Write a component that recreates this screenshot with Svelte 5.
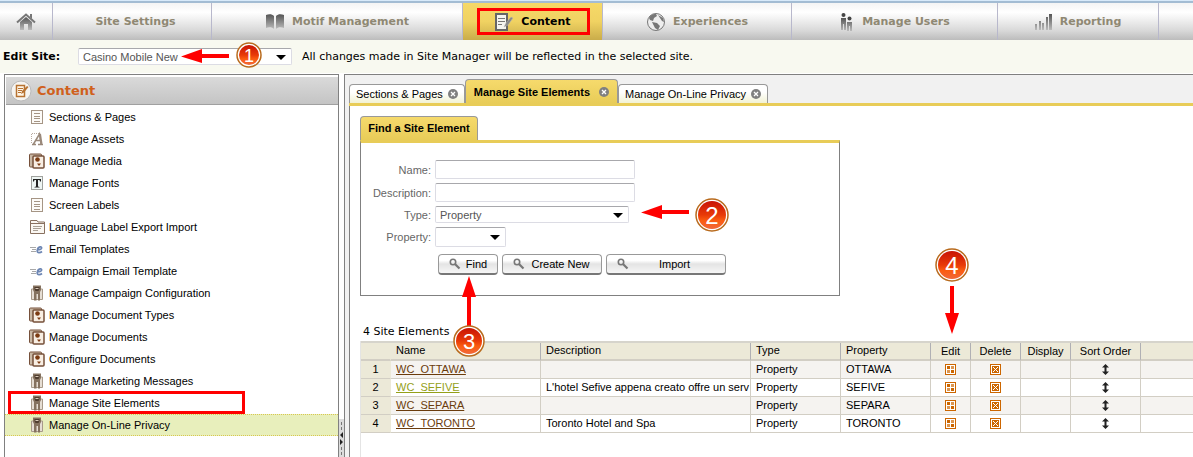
<script>
  let site = $state('Casino Mobile New');
  let type = $state('Property');
  let property = $state('');
  let name = $state('');
  let description = $state('');

  const nav = [
    { label: 'Site Settings' },
    { label: 'Motif Management', icon: 'book' },
    { label: 'Content', icon: 'edit', active: true },
    { label: 'Experiences', icon: 'globe' },
    { label: 'Manage Users', icon: 'users' },
    { label: 'Reporting', icon: 'chart' }
  ];

  const menu = [
    ['Sections & Pages', 'page'],
    ['Manage Assets', 'asset'],
    ['Manage Media', 'media'],
    ['Manage Fonts', 'font'],
    ['Screen Labels', 'page'],
    ['Language Label Export Import', 'window'],
    ['Email Templates', 'mail'],
    ['Campaign Email Template', 'mail'],
    ['Manage Campaign Configuration', 'tool'],
    ['Manage Document Types', 'media'],
    ['Manage Documents', 'media'],
    ['Configure Documents', 'media'],
    ['Manage Marketing Messages', 'tool'],
    ['Manage Site Elements', 'tool'],
    ['Manage On-Line Privacy', 'tool']
  ];

  const tabs = ['Sections & Pages', 'Manage Site Elements', 'Manage On-Line Privacy'];
  const buttons = [
    ['Find', 'find'],
    ['Create New', 'create'],
    ['Import', 'import']
  ];

  const rows = [
    { name: 'WC_OTTAWA', desc: '', property: 'OTTAWA' },
    { name: 'WC_SEFIVE', desc: "L'hotel Sefive appena creato offre un serv", property: 'SEFIVE' },
    { name: 'WC_SEPARA', desc: '', property: 'SEPARA' },
    { name: 'WC_TORONTO', desc: 'Toronto Hotel and Spa', property: 'TORONTO' }
  ];
</script>

{#snippet navIcon(kind)}
  {#if kind === 'book'}
    <svg width="20" height="18" viewBox="0 0 20 18" aria-hidden="true">
      <path d="M1 2C4 1 7 1 9 3V16C7 14 4 14 1 15Z" fill="url(#fade)" />
      <path d="M11 3C13 1 16 1 19 2V15C16 14 13 14 11 16Z" fill="url(#fade)" />
    </svg>
  {:else if kind === 'edit'}
    <svg width="20" height="20" viewBox="0 0 20 20" aria-hidden="true">
      <rect x="2" y="2" width="11" height="16" fill="#f4f4f0" stroke="#666" stroke-width="2" />
      <path d="M4 6.500H11M4 9.500H11M4 12.500H8" stroke="#777" />
      <path d="M10 15L12 11L17 5L19 6L14 13Z" fill="#888" stroke="#bbb" stroke-width=".5" />
    </svg>
  {:else if kind === 'globe'}
    <svg width="20" height="20" viewBox="0 0 20 20" aria-hidden="true">
      <circle cx="10" cy="10" r="8.500" fill="#eee" stroke="#777" />
      <path d="M3 6C5 2 8 2 10 2L11 4L8 6L7 9L4 8ZM12 3L17 6L18 10L16 9L14 6ZM6 10L11 11L14 14L12 18L9 16Z" fill="#777" />
    </svg>
  {:else if kind === 'users'}
    <svg width="16" height="20" viewBox="0 0 16 20" aria-hidden="true">
      <circle cx="4.500" cy="3" r="2" fill="#444" />
      <circle cx="10.500" cy="6.500" r="2" fill="#444" />
      <path d="M2 6H7V18H2ZM8 10H13V19H8Z" fill="url(#fade)" />
      <path d="M4.500 12V18M10.500 14V19" stroke="#ddd" />
    </svg>
  {:else if kind === 'chart'}
    <svg width="18" height="20" viewBox="0 0 18 20" aria-hidden="true">
      <path d="M0 12H2V18H0ZM4 9H6V18H4ZM7 11H9V18H7ZM11 5H13V18H11ZM14 2H17V18H14Z" fill="url(#fade)" />
    </svg>
  {:else}
    <i></i>
  {/if}
{/snippet}

{#snippet menuIcon(kind)}
  <svg class="micon" width="16" height="16" viewBox="0 0 16 16" aria-hidden="true">
    {#if kind === 'page'}
      <rect x="2.500" y="1.500" width="11" height="13" fill="#fdfbf8" stroke="#a59585" />
      <path d="M5 4.500H11M5 7.500H11M5 9.500H11M5 12.500H11" stroke="#a59585" />
    {:else if kind === 'asset'}
      <path d="M2.500 12V2.500H10" fill="none" stroke="#b8aaa0" stroke-dasharray="1 1" />
      <path d="M3 13.500H7M9 13.500H14M4.500 13L10.500 3L12 13M6 9.500H11" fill="none" stroke="#9a897b" stroke-width="1.500" />
      <path d="M11 3L12.500 13" stroke="#9a897b" stroke-width="2" />
    {:else if kind === 'media'}
      <rect x="0.500" y="1" width="12" height="13" rx="1" fill="#c9b8a5" stroke="#76503a" />
      <rect x="4" y="3" width="11" height="12" rx="1" fill="#f8eee3" stroke="#76503a" stroke-width="1.500" />
      <circle cx="8.500" cy="6.500" r="2.300" fill="#7c3b12" />
      <path d="M8 10.500H12L10 13Z" fill="#7c3b12" />
    {:else if kind === 'font'}
      <rect x="2.500" y="1.500" width="11" height="13" fill="#eef5f3" stroke="#a0a29e" />
      <path d="M4 4H12V6.500H11L10.500 5H9V11.500L10.500 12V12.500H5.500V12L7 11.500V5H5.500L5 6.500H4Z" fill="#222" />
    {:else if kind === 'window'}
      <path d="M1.500 14.500V1.500H8L9 3H15.500V14.500Z" fill="#faf7f2" stroke="#88705f" />
      <path d="M1.500 4.500H15.500" stroke="#88705f" />
      <path d="M4 7.500H13M4 9.500H12M4 11.500H9" stroke="#aaa095" />
    {:else if kind === 'mail'}
      <path d="M1 6.500H7M3 8.500H7M2 10.500H7" stroke="#a8a8a8" />
      <path d="M8.500 8.800C11 8.800 13 8 12.600 6.500C12 5 8.500 6 8.200 9.500C8 12.500 11.500 11.800 13 10.500" fill="none" stroke="#6d86b4" stroke-width="1.700" />
    {:else}
      <path d="M2.500 4V14.500H13.500V4Z" fill="#e6ded4" stroke="#a89a8a" />
      <path d="M4 0.500H12V5L11 7V15.500H9V9H7.500V15.500H5V7L4 5Z" fill="#85725f" />
      <path d="M5.500 2H10.500V4L9.500 6H6.500L5.500 4Z" fill="#4e3c2e" />
      <path d="M6.500 3.500H9.500" stroke="#d8c9b8" />
    {/if}
  </svg>
{/snippet}

{#snippet badge(n, cx, cy, r)}
  <g>
    <circle {cx} {cy} r={r - 1} fill="#fff" stroke="#b86a1c" stroke-width="1.500" />
    <circle {cx} {cy} r={r - 3} fill="url(#hot)" />
    <text x={cx} y={cy + Math.round(r / 2)} font-size={Math.round(r * 1.4)}>{n}</text>
  </g>
{/snippet}

<svg class="defs" width="0" height="0" aria-hidden="true">
  <defs>
    <linearGradient id="fade" x2="0" y2="1">
      <stop offset="0" stop-color="#555" />
      <stop offset="1" stop-color="#bbb" />
    </linearGradient>
    <linearGradient id="hot" x2="0" y2="1">
      <stop offset="0" stop-color="#c81404" />
      <stop offset=".5" stop-color="#e83a08" />
      <stop offset=".7" stop-color="#fb5c10" />
      <stop offset="1" stop-color="#f0683a" />
    </linearGradient>
  </defs>
</svg>

<div class="page">
  <nav>
    <a href="#home" aria-label="Home">
      <svg width="20" height="20" viewBox="0 0 20 20" aria-hidden="true">
        <path d="M4 10L10 5L16 10V18H12V12H8V18H4Z" fill="url(#fade)" />
        <path d="M1 10.500L10 2.500L19 10.500" fill="none" stroke="#777" stroke-width="2" />
        <path d="M14 2H16V7L14 5Z" fill="#777" />
      </svg>
    </a>
    {#each nav as item}
      <a href="#{item.label}" class:active={item.active}>
        {@render navIcon(item.icon)}
        <span>{item.label}</span>
      </a>
    {/each}
  </nav>

  <div class="sitebar">
    <label for="site">Edit Site:</label>
    <span class="select site">
      <select id="site" bind:value={site}><option>Casino Mobile New</option></select>
    </span>
    <span>All changes made in Site Manager will be reflected in the selected site.</span>
  </div>

  <div class="body">
    <aside>
      <h2>
        <svg width="22" height="22" viewBox="0 0 22 22" aria-hidden="true">
          <circle cx="11" cy="11" r="10" fill="#f6f4f1" stroke="#bbb" />
          <path d="M6.500 5.500H14.500V16.500H6.500Z" fill="#fff6e8" stroke="#b87333" stroke-width="1.500" />
          <path d="M8 8.500H13M8 10.500H12M8 12.500H11" stroke="#b87333" />
          <path d="M11 14L12 11L17 6L18.500 7L14 12.500Z" fill="#b87333" />
        </svg>
        Content
      </h2>
      <ul>
        {#each menu as [label, icon], i}
          <li class:current={i === menu.length - 1} class:marked={label === 'Manage Site Elements'}>
            <a href="#{label}">{@render menuIcon(icon)}{label}</a>
          </li>
        {/each}
      </ul>
    </aside>

    <div class="splitter">
      <div class="grip">
        <svg width="5" height="38" viewBox="0 0 5 38" aria-hidden="true">
          <path d="M2.500 3V13M2.500 28V38" stroke="#777" stroke-dasharray="3 2" />
          <path d="M4 13V19L1 16ZM1 20V26L4 23Z" fill="#222" />
        </svg>
      </div>
    </div>

    <main>
      <div class="tabs">
        {#each tabs as tab, i}
          <div class="tab" class:on={i === 1}>
            <span>{tab}</span>
            <button class="close" aria-label="Close {tab}">
              <svg width="10" height="10" viewBox="0 0 10 10" aria-hidden="true">
                <circle cx="5" cy="5" r="5" fill="#808080" />
                <path d="M3 3L7 7M7 3L3 7" stroke="#fff" stroke-width="1.300" />
              </svg>
            </button>
          </div>
        {/each}
      </div>

      <div class="content">
        <section class="finder">
          <h3>Find a Site Element</h3>
          <form onsubmit={(e) => e.preventDefault()}>
            <label for="name">Name:</label>
            <input id="name" type="text" bind:value={name} />
            <label for="description">Description:</label>
            <input id="description" type="text" bind:value={description} />
            <label for="type">Type:</label>
            <span class="select type">
              <select id="type" bind:value={type}><option>Property</option></select>
            </span>
            <label for="property">Property:</label>
            <span class="select property">
              <select id="property" bind:value={property}><option value=""></option></select>
            </span>
            <div class="buttons">
              {#each buttons as [label, kind]}
                <button type="button" class="push {kind}">
                  <svg width="12" height="12" viewBox="0 0 12 12" aria-hidden="true">
                    <circle cx="4" cy="4" r="2.700" fill="none" stroke="#777" stroke-width="1.600" />
                    <path d="M6 6L10.500 10.500" stroke="#777" stroke-width="2.200" />
                  </svg>
                  <span>{label}</span>
                </button>
              {/each}
            </div>
          </form>
        </section>

        <p class="count">4 Site Elements</p>
        <div class="grid">
          <table>
            <colgroup>
              <col class="w30" /><col class="w150" /><col class="w210" /><col class="w90" /><col class="w90" />
              <col class="w40" /><col class="w50" /><col class="w50" /><col class="w70" /><col />
            </colgroup>
            <thead>
              <tr>
                <th></th><th>Name</th><th>Description</th><th>Type</th><th>Property</th>
                <th class="mid">Edit</th><th class="mid">Delete</th><th class="mid">Display</th>
                <th class="mid">Sort Order</th><th></th>
              </tr>
            </thead>
            <tbody>
              {#each rows as row, i}
                <tr>
                  <td class="num">{i + 1}</td>
                  <td><a href="#{row.name}" class:visited={i === 1}>{row.name}</a></td>
                  <td>{row.desc}</td>
                  <td>Property</td>
                  <td>{row.property}</td>
                  <td class="mid">
                    <button aria-label="Edit {row.name}">
                      <svg width="11" height="11" viewBox="0 0 11 11" aria-hidden="true">
                        <rect x=".5" y=".5" width="10" height="10" fill="#fff" stroke="#c60" />
                        <path d="M2 2H5V5H2ZM6 6H9V9H6Z" fill="#c60" />
                        <path d="M6 2H9V5H6ZM2 6H5V9H2Z" fill="#dc9650" />
                      </svg>
                    </button>
                  </td>
                  <td class="mid">
                    <button aria-label="Delete {row.name}">
                      <svg width="11" height="11" viewBox="0 0 11 11" aria-hidden="true">
                        <rect x=".5" y=".5" width="10" height="10" fill="#fff" stroke="#c60" />
                        <rect x="2" y="2" width="7" height="7" fill="#c60" />
                        <path d="M3 3L8 8M8 3L3 8" stroke="#fff" />
                      </svg>
                    </button>
                  </td>
                  <td></td>
                  <td class="mid">
                    <button aria-label="Sort {row.name}">
                      <svg width="7" height="11" viewBox="0 0 7 11" aria-hidden="true">
                        <path d="M3.500 0L7 3.500H4.500V7.500H7L3.500 11L0 7.500H2.500V3.500H0Z" fill="#222" />
                      </svg>
                    </button>
                  </td>
                  <td></td>
                </tr>
              {/each}
            </tbody>
          </table>
        </div>
      </div>
    </main>
  </div>

  <svg class="callouts" width="980" height="370" viewBox="0 0 980 370" aria-hidden="true">
    <g fill="#f00">
      <path d="M181 56.500L202 49V54H229V58H202V63Z" />
      <path d="M641 212.500L662 205V210H689V214H662V219Z" />
      <path d="M469 276L476 297H471V326H467V297H462Z" />
      <path d="M952 334L945 313H950V286H954V313H959Z" />
    </g>
    {@render badge(1, 249, 55, 13)}
    {@render badge(2, 712, 215, 17)}
    {@render badge(3, 469, 341, 16)}
    {@render badge(4, 952, 265, 17)}
  </svg>
</div>

<style>
  :global(body) {
    margin: 0;
    background: #fff;
  }
  .defs {
    position: absolute;
  }
  .page {
    position: relative;
    box-sizing: border-box;
    min-height: 100vh;
    display: flex;
    flex-direction: column;
    overflow: hidden;
    font: 11px/14px 'Liberation Sans', Arial, sans-serif;
    color: #000;
  }
  a {
    color: inherit;
    text-decoration: none;
  }
  button {
    font: inherit;
    color: inherit;
  }

  nav {
    display: grid;
    grid-template-columns: 53fr 159fr 251fr 140fr 189fr 206fr 161fr 34fr;
    height: 37px;
    margin-top: 1px;
    border-top: 2px solid #a3bcd3;
    box-shadow: 0 -1px #d8eafa;
    background: linear-gradient(#f4f4f4, #fff 25%, #f0f0f0 45%, #d8d8d8 75%, #bcbcbc);
  }
  nav a {
    position: relative;
    display: flex;
    align-items: center;
    justify-content: center;
    gap: 7px;
    border-right: 1px solid #b8b8cc;
    font: bold 11px/16px 'DejaVu Sans', Verdana, sans-serif;
    color: #8f8873;
    white-space: nowrap;
  }
  nav a.active {
    color: #000;
    background: linear-gradient(#f6d968, #f0d262 50%, #c9ac4a);
  }
  nav a.active::after {
    content: '';
    position: absolute;
    inset: 5px 12px 5px 14px;
    border: 3px solid #f00;
  }

  .sitebar {
    display: flex;
    align-items: center;
    gap: 10px;
    height: 33px;
    padding-left: 3px;
    background: #f8f9f0;
    font: 11px/16px 'DejaVu Sans', Verdana, sans-serif;
  }
  .sitebar label {
    width: 65px;
    font-weight: bold;
    white-space: nowrap;
  }

  .select {
    position: relative;
    display: block;
  }
  .select::after {
    content: '';
    position: absolute;
    right: 6px;
    top: 50%;
    margin-top: -2px;
    border: 5px solid transparent;
    border-top-color: #000;
    border-bottom: 0;
    pointer-events: none;
  }
  select,
  input {
    box-sizing: border-box;
    width: 100%;
    height: 100%;
    margin: 0;
    padding: 0 4px;
    display: block;
    appearance: none;
    border: 1px solid #dcdce4;
    border-top-color: #a8a8ac;
    border-radius: 2px;
    background: #fff;
    font: 11px/14px 'Liberation Sans', Arial, sans-serif;
    color: #555;
  }
  .site {
    width: 214px;
    height: 17px;
  }
  .type {
    width: 194px;
    height: 17px;
  }
  .property {
    width: 71px;
    height: 20px;
  }

  .body {
    flex: 1;
    display: flex;
    margin-top: 1px;
    padding-left: 4px;
  }
  aside {
    width: 333px;
    flex: none;
    border: 1px solid #808080;
    border-bottom: 0;
  }
  h2 {
    display: flex;
    align-items: center;
    gap: 5px;
    height: 27px;
    margin: 2px 0 0 1px;
    padding-left: 4px;
    border-bottom: 1px solid #a0a0a0;
    background: linear-gradient(#dadada, #c4c4c4);
    font: bold 13px/16px 'DejaVu Sans', Verdana, sans-serif;
    color: #d0601c;
  }
  ul {
    list-style: none;
    margin: 1px 0 0;
    padding: 0;
  }
  li {
    position: relative;
  }
  li a {
    box-sizing: border-box;
    display: flex;
    align-items: center;
    gap: 4px;
    height: 22px;
    padding-left: 24px;
    border: 1px solid transparent;
    border-width: 1px 0;
  }
  li.current a {
    background: #e8efbc;
    border: 1px dotted #d8c850;
    border-width: 1px 0;
  }
  li.marked::after {
    content: '';
    position: absolute;
    z-index: 1;
    inset: -1px 93px 0 3px;
    border: 3px solid #f00;
  }

  .splitter {
    width: 5px;
    flex: none;
    display: flex;
    align-items: flex-end;
    background: #fff;
  }
  .grip {
    width: 5px;
    height: 38px;
    background: #dcdcdc;
  }

  main {
    flex: 1;
    min-width: 0;
    display: flex;
    flex-direction: column;
    padding-left: 4px;
    border: 1px solid #808080;
    border-width: 1px 0 0 1px;
    background: #f1f1f1;
  }
  .tabs {
    display: flex;
    align-items: flex-end;
    height: 28px;
    border-bottom: 3px solid #e8cc58;
  }
  .tab {
    box-sizing: border-box;
    display: flex;
    align-items: center;
    gap: 5px;
    height: 19px;
    padding: 0 6px;
    border: 1px solid #999;
    border-bottom: 0;
    border-radius: 4px 4px 0 0;
    background: linear-gradient(#fff 40%, #f2f2d4);
    white-space: nowrap;
  }
  .tab.on {
    height: 24px;
    padding: 0 8px;
    gap: 9px;
    background: linear-gradient(#f6da6c, #e8cc58);
    font-weight: bold;
  }
  .close,
  td button {
    display: block;
    padding: 0;
    border: 0;
    background: none;
  }
  .close svg,
  td svg {
    display: block;
  }

  .content {
    flex: 1;
    padding: 10px 0 0 10px;
    border-left: 1px solid #808080;
    background: #fff;
  }
  .finder {
    width: 480px;
  }
  h3 {
    box-sizing: border-box;
    width: 118px;
    height: 24px;
    margin: 0;
    border: 1px solid #999;
    border-bottom: 0;
    border-radius: 4px 4px 0 0;
    background: linear-gradient(#f6da6c, #e8cc58);
    font-size: 11px;
    line-height: 23px;
    text-align: center;
    white-space: nowrap;
  }
  form {
    box-sizing: border-box;
    display: grid;
    grid-template-columns: 70px 1fr;
    grid-template-rows: 19px 19px 17px 20px 22px;
    align-items: center;
    gap: 4px;
    height: 156px;
    padding: 17px 0 0;
    border: 1px solid #808080;
    border-top: 3px solid #e8cc58;
  }
  form label {
    text-align: right;
    color: #666;
  }
  form input {
    width: 200px;
  }
  .buttons {
    grid-column: 1 / -1;
    display: flex;
    gap: 4px;
    margin: 4px 0 0 77px;
  }
  .push {
    display: flex;
    align-items: center;
    height: 21px;
    padding: 0 10px;
    border: 1px solid #999;
    border-bottom: 2px solid #777;
    border-radius: 4px;
    background: linear-gradient(#fff 30%, #e4e4e4 50%, #f6f6f6);
  }
  .push span {
    flex: 1;
    text-align: center;
  }
  .find {
    width: 60px;
  }
  .create {
    width: 100px;
  }
  .import {
    width: 120px;
  }
  .push.find,
  .push.create,
  .push.import {
    padding-right: 5px;
  }

  .count {
    margin: 28px 0 1px 3px;
    font: 11px/16px 'DejaVu Sans', Verdana, sans-serif;
  }
  .grid {
    height: 116px;
    border-left: 1px solid #e4e4e4;
  }
  table {
    width: 100%;
    table-layout: fixed;
    border-collapse: separate;
    border-spacing: 0;
    border-top: 2px solid #d6d4cc;
  }
  .w30 {
    width: 30px;
  }
  .w40 {
    width: 40px;
  }
  .w50 {
    width: 50px;
  }
  .w70 {
    width: 70px;
  }
  .w90 {
    width: 90px;
  }
  .w150 {
    width: 150px;
  }
  .w210 {
    width: 210px;
  }
  th,
  td {
    box-sizing: border-box;
    height: 18px;
    padding: 0 0 2px 5px;
    border-right: 1px solid #d2cec4;
    border-bottom: 1px solid #d2cec4;
    overflow: hidden;
    font-weight: normal;
    text-align: left;
    white-space: nowrap;
  }
  th {
    background: #ece9d8;
    border-right-color: #b0b0b4;
    border-bottom-width: 2px;
  }
  th:first-child {
    border-right-color: #ece9d8;
  }
  th:last-child,
  td:last-child {
    border-right: 0;
  }
  tr:nth-child(odd) td {
    background: #f5f3f0;
  }
  tr .num,
  tr:nth-child(odd) .num {
    padding-left: 0;
    text-align: center;
    background: #ece9d8;
    border-right-color: #ece9d8;
  }
  .mid {
    padding: 0;
    text-align: center;
  }
  td button {
    margin: 0 auto;
  }
  td a {
    color: #6b3c0c;
    text-decoration: underline;
  }
  td a.visited {
    color: #94a018;
  }

  .callouts {
    position: absolute;
    left: 0;
    top: 0;
    pointer-events: none;
  }
  .callouts text {
    fill: #fff;
    text-anchor: middle;
    font-family: 'Liberation Sans', Arial, sans-serif;
  }
</style>
